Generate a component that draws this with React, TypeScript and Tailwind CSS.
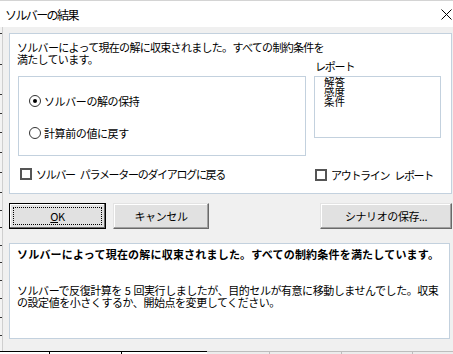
import React from "react";

const ticks = [6, 37, 67, 86, 105, 125, 145, 165, 183, 200, 218, 235, 253, 271, 290, 308];

function Radio({ checked, label }: { checked?: boolean; label: string }) {
  return (
    <div className="flex items-center h-[14px] gap-[3px]">
      <div className="w-[12px] h-[12px] rounded-full border border-[#333] bg-white flex items-center justify-center">
        {checked && <div className="w-[4px] h-[4px] rounded-full bg-black" />}
      </div>
      <span>{label}</span>
    </div>
  );
}

function Check({ words }: { words: string[] }) {
  return (
    <div className="flex items-center h-[14px] gap-[4px]">
      <div className="w-[12px] h-[12px] border-2 border-[#555] bg-white" />
      <span className="flex gap-[5px] whitespace-nowrap tracking-[-1.3px]">
        {words.map((w) => (
          <span key={w}>{w}</span>
        ))}
      </span>
    </div>
  );
}

function Button({ children, width, isDefault }: { children: React.ReactNode; width: string; isDefault?: boolean }) {
  if (isDefault) {
    return (
      <div className={`${width} h-[26px] border border-black bg-[#e1e1e1] shadow-[inset_-1px_-1px_0_#696969,inset_1px_1px_0_#fff] p-[3px]`}>
        <div className="h-full border border-dotted border-black flex items-center justify-center">
          {children}
        </div>
      </div>
    );
  }
  return (
    <div className={`${width} h-[26px] border border-t-[#e3e3e3] border-l-[#e3e3e3] border-b-[#696969] border-r-[#696969] bg-[#e1e1e1] shadow-[inset_-1px_-1px_0_#a0a0a0,inset_1px_1px_0_#fff] flex items-center justify-center`}>
      {children}
    </div>
  );
}

export default function App() {
  return (
    <div className="w-[453px] h-[354px] overflow-hidden flex flex-col bg-[#f0f0f0] text-black text-[11px] leading-[12px] font-['Noto_Sans_CJK_JP','Noto_Sans',sans-serif]">
      {/* Title bar */}
      <div className="h-[27px] border-t border-[#d4d4d4] bg-white flex items-center justify-between pl-[5px] pt-[2px]">
        <span className="text-[12px] tracking-[-1.6px]">ソルバーの結果</span>
        <svg width="11" height="11" viewBox="0 0 11 11" className="mr-[1px] -mt-[2px]">
          <path d="M0.5 0.5 L10.5 10.5 M10.5 0.5 L0.5 10.5" stroke="#000" strokeWidth="1" />
        </svg>
      </div>

      <div className="flex-1 flex">
        {/* Worksheet behind */}
        <div className="w-[3px] bg-[#f3f3f3] border-r border-[#cfcfcf] flex flex-col">
          {ticks.map((t, i) => (
            <div key={i} className="h-[1px] w-[2px] bg-[#333]" style={{ marginTop: i === 0 ? t : t - ticks[i - 1] - 1 }} />
          ))}
        </div>

        {/* Dialog body */}
        <div className="flex-1 pl-[6px] pt-[6px] tracking-[-0.4px]">
          <div className="w-[443px] h-[161px] bg-white border border-[#c3d1de] pl-[7px] pt-[7px] flex">
            <div className="w-[289px] flex flex-col">
              <p className="whitespace-nowrap tracking-[-0.7px]">
                ソルバーによって現在の解に収束されました。すべての制約条件を
                <br />
                満たしています。
              </p>
              <div className="ml-[1px] mt-[11px] w-[288px] h-[80px] border border-[#c3d1de] pl-[10px] pt-[17px] flex flex-col gap-[18px]">
                <Radio checked label="ソルバーの解の保持" />
                <Radio label="計算前の値に戻す" />
              </div>
              <div className="ml-[3px] mt-[11px]">
                <Check words={["ソルバー", "パラメーターのダイアログに戻る"]} />
              </div>
            </div>
            <div className="ml-[8px] w-[127px] flex flex-col">
              <p className="pl-[1px] mt-[19px] tracking-[-1.2px]">レポート</p>
              <div className="mt-[4px] h-[62px] border border-[#c3d1de] pl-[9px] text-[10.5px] leading-[10px] tracking-normal">
                <p>解答</p>
                <p>感度</p>
                <p>条件</p>
              </div>
              <div className="ml-[1px] mt-[30px]">
                <Check words={["アウトライン", "レポート"]} />
              </div>
            </div>
          </div>

          <div className="mt-[9px] flex">
            <Button width="w-[97px]" isDefault>
              <span><span className="underline">O</span>K</span>
            </Button>
            <div className="ml-[7px]">
              <Button width="w-[96px]">キャンセル</Button>
            </div>
            <div className="ml-[111px]">
              <Button width="w-[132px]">シナリオの保存...</Button>
            </div>
          </div>

          <div className="mt-[14px] w-[441px] h-[96px] bg-white border border-[#c3d1de] pl-[7px] pt-[4px]">
            <p className="font-bold tracking-[0.2px] whitespace-nowrap">
              ソルバーによって現在の解に収束されました。すべての制約条件を満たしています。
            </p>
            <p className="mt-[24px] tracking-[-0.45px] whitespace-nowrap">
              ソルバーで反復計算を<span className="px-[3px]">5</span>回実行しましたが、目的セルが有意に移動しませんでした。収束
              <br />
              の設定値を小さくするか、開始点を変更してください。
            </p>
          </div>
        </div>
      </div>

      {/* Worksheet below */}
      <div className="h-[3px] flex">
        <div className="w-[207px] border-t border-black bg-white flex">
          <div className="w-[50px] border-r border-black" />
          <div className="w-[72px] border-r border-black" />
        </div>
        <div className="flex-1 border-t border-[#bdbdbd] bg-[#ececec] flex">
          <div className="w-[63px] border-r border-[#bdbdbd]" />
          <div className="w-[72px] border-r border-[#bdbdbd]" />
          <div className="w-[71px] border-r border-[#bdbdbd]" />
        </div>
      </div>
    </div>
  );
}
